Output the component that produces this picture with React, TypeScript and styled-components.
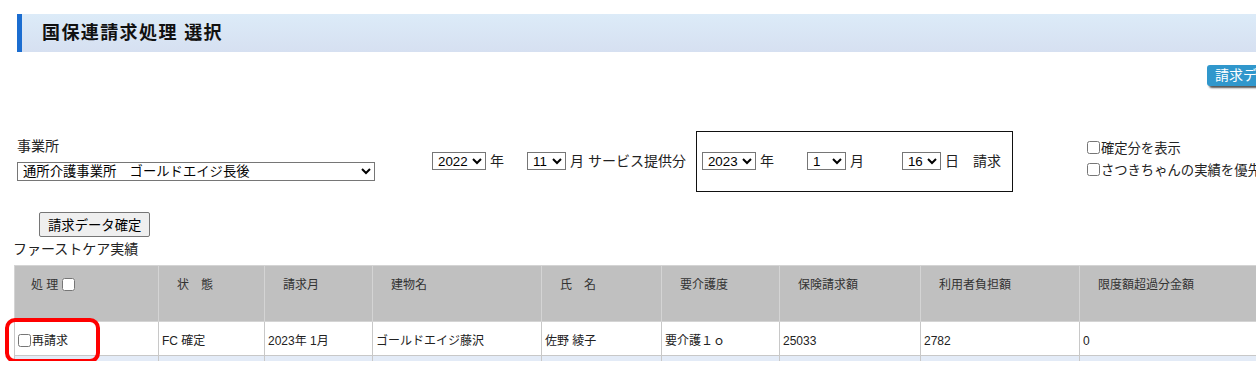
import React from "react";
import styled, { createGlobalStyle } from "styled-components";

const GlobalStyle = createGlobalStyle`
  html, body {
    margin: 0;
    padding: 0;
    background: #ffffff;
    overflow: hidden;
  }
  body {
    font-family: "Liberation Sans", "Noto Sans CJK JP", sans-serif;
    color: #222;
  }
`;

const FONT = `"Liberation Sans", "Noto Sans CJK JP", sans-serif`;

const Page = styled.div`
  width: 1330px;
`;

const TitleBar = styled.h1`
  margin: 14px 0 0 17px;
  height: 38px;
  box-sizing: border-box;
  border-left: 5px solid #1b6dd0;
  background: linear-gradient(to bottom, #dcebf8, #d6e0f1);
  display: flex;
  align-items: center;
  padding-left: 20px;
  font-family: ${FONT};
  font-weight: 700;
  font-size: 18px;
  line-height: 20px;
  letter-spacing: 1.4px;
  color: #111;
`;

const ActionBar = styled.div`
  display: flex;
  justify-content: flex-end;
  margin-top: 13px;
  padding-right: 9px;
`;

const BlueButton = styled.button`
  height: 21px;
  padding: 0 8px;
  background: #3097cc;
  color: #fff;
  border: none;
  border-radius: 3px;
  box-shadow: 2px 2px 2px #555;
  font-family: ${FONT};
  font-size: 14px;
  line-height: 21px;
  white-space: nowrap;
`;

const FilterRow = styled.div`
  display: flex;
  align-items: flex-start;
  margin-top: 45px;
  padding-left: 17px;
`;

const OfficeGroup = styled.div`
  width: 358px;
  padding-top: 6px;
  display: flex;
  flex-direction: column;
`;

const FieldLabel = styled.div`
  font-size: 14px;
  line-height: 18px;
  margin-bottom: 7px;
`;

const Select = styled.select<{ $w: number; $h?: number }>`
  width: ${(p) => p.$w}px;
  height: ${(p) => p.$h ?? 18}px;
  box-sizing: border-box;
  margin: 0;
  padding: 0 0 0 1px;
  border: 1px solid #767676;
  border-radius: 0;
  background: #fff;
  color: #000;
  font-family: ${FONT};
  font-size: 13.33px;
`;

const DateGroup = styled.div`
  margin-left: 57px;
  padding-top: 21px;
  display: flex;
  align-items: center;
  height: 18px;
`;

const Unit = styled.span<{ $ml?: number }>`
  margin-left: ${(p) => p.$ml ?? 4}px;
  font-size: 14px;
  line-height: 18px;
  white-space: pre;
`;

const Gap = styled.span<{ $w: number }>`
  display: inline-block;
  width: ${(p) => p.$w}px;
`;

const RequestBox = styled.div`
  margin-left: 10px;
  width: 317px;
  height: 61px;
  box-sizing: border-box;
  border: 1px solid #111;
  padding: 20px 0 0 5px;
`;

const InlineRow = styled.div`
  display: flex;
  align-items: center;
  height: 18px;
`;

const OptionsGroup = styled.div`
  margin-left: 74px;
  padding-top: 5px;
  display: flex;
  flex-direction: column;
`;

const OptionRow = styled.label`
  display: flex;
  align-items: center;
  height: 22px;
  font-size: 13.33px;
  white-space: nowrap;
`;

const Check = styled.input.attrs({ type: "checkbox" })<{ $ml?: number }>`
  width: 13px;
  height: 13px;
  margin: 0 1px 0 ${(p) => p.$ml ?? 0}px;
  vertical-align: -2px;
`;

const GrayButton = styled.button`
  display: block;
  margin: 20px 0 0 39px;
  height: 25px;
  padding: 0 8px;
  border: 1px solid #767676;
  border-radius: 2px;
  background: #efefef;
  color: #000;
  font-family: ${FONT};
  font-size: 13.33px;
`;

const SectionTitle = styled.div`
  margin: 4px 0 0 13px;
  font-size: 14px;
  line-height: 16px;
`;

const TableWrap = styled.div`
  position: relative;
  margin: 8px 0 0 14px;
`;

const Table = styled.table`
  border-collapse: collapse;
  table-layout: fixed;
  width: 1265px;
  font-size: 12px;
`;

const Th = styled.th<{ $pl?: number }>`
  height: 56px;
  box-sizing: border-box;
  background: #c0c0c0;
  border: 1px solid #d4d4d4;
  vertical-align: top;
  padding: 11px 0 0 ${(p) => p.$pl ?? 18}px;
  text-align: left;
  font-weight: normal;
  line-height: 16px;
  color: #333;
  white-space: pre;
`;

const Td = styled.td`
  height: 34px;
  box-sizing: border-box;
  padding: 4px 0 0 3px;
  border: 1px solid #c8c8c8;
  background: #fff;
  vertical-align: middle;
  line-height: 16px;
  color: #222;
  white-space: nowrap;
`;

const StripTd = styled.td`
  height: 5px;
  padding: 0;
  border: 1px solid #c8c8c8;
  border-bottom: none;
  background: #e3ebf7;
`;

const Highlight = styled.div`
  position: absolute;
  left: -9px;
  top: 53px;
  width: 95px;
  height: 45px;
  box-sizing: border-box;
  border: 4px solid #ff0000;
  border-radius: 10px;
  pointer-events: none;
`;

const columns: { label: string; width: number }[] = [
  { label: "", width: 144 },
  { label: "状　態", width: 106 },
  { label: "請求月", width: 108 },
  { label: "建物名", width: 169 },
  { label: "氏　名", width: 120 },
  { label: "要介護度", width: 118 },
  { label: "保険請求額", width: 141 },
  { label: "利用者負担額", width: 159 },
  { label: "限度額超過分金額", width: 200 },
];

const row = ["FC 確定", "2023年 1月", "ゴールドエイジ藤沢", "佐野 綾子", "要介護１ｏ", "25033", "2782", "0"];

export default function App() {
  return (
    <Page>
      <GlobalStyle />
      <TitleBar>国保連請求処理 選択</TitleBar>
      <ActionBar>
        <BlueButton>請求データ出力</BlueButton>
      </ActionBar>

      <FilterRow>
        <OfficeGroup>
          <FieldLabel>事業所</FieldLabel>
          <Select $w={358} $h={19} defaultValue="a">
            <option value="a">通所介護事業所　ゴールドエイジ長後</option>
          </Select>
        </OfficeGroup>

        <DateGroup>
          <Select $w={54} defaultValue="2022">
            <option>2021</option>
            <option>2022</option>
            <option>2023</option>
          </Select>
          <Unit>年</Unit>
          <Gap $w={23} />
          <Select $w={39} defaultValue="11">
            {Array.from({ length: 12 }, (_, i) => (
              <option key={i}>{i + 1}</option>
            ))}
          </Select>
          <Unit>月 サービス提供分</Unit>
        </DateGroup>

        <RequestBox>
          <InlineRow>
            <Select $w={54} defaultValue="2023">
              <option>2022</option>
              <option>2023</option>
            </Select>
            <Unit>年</Unit>
            <Gap $w={33} />
            <Select $w={39} defaultValue="1">
              {Array.from({ length: 12 }, (_, i) => (
                <option key={i}>{i + 1}</option>
              ))}
            </Select>
            <Unit>月</Unit>
            <Gap $w={38} />
            <Select $w={39} defaultValue="16">
              {Array.from({ length: 31 }, (_, i) => (
                <option key={i}>{i + 1}</option>
              ))}
            </Select>
            <Unit>日　請求</Unit>
          </InlineRow>
        </RequestBox>

        <OptionsGroup>
          <OptionRow>
            <Check />
            確定分を表示
          </OptionRow>
          <OptionRow>
            <Check />
            さつきちゃんの実績を優先して表示
          </OptionRow>
        </OptionsGroup>
      </FilterRow>

      <GrayButton>請求データ確定</GrayButton>
      <SectionTitle>ファーストケア実績</SectionTitle>

      <TableWrap>
        <Table>
          <colgroup>
            {columns.map((c, i) => (
              <col key={i} style={{ width: c.width }} />
            ))}
          </colgroup>
          <thead>
            <tr>
              <Th $pl={16}>
                処 理<Check $ml={4} />
              </Th>
              {columns.slice(1).map((c) => (
                <Th key={c.label}>{c.label}</Th>
              ))}
            </tr>
          </thead>
          <tbody>
            <tr>
              <Td>
                <Check />
                再請求
              </Td>
              {row.map((v, i) => (
                <Td key={i}>{v}</Td>
              ))}
            </tr>
            <tr>
              {columns.map((_, i) => (
                <StripTd key={i} />
              ))}
            </tr>
          </tbody>
        </Table>
        <Highlight />
      </TableWrap>
    </Page>
  );
}
